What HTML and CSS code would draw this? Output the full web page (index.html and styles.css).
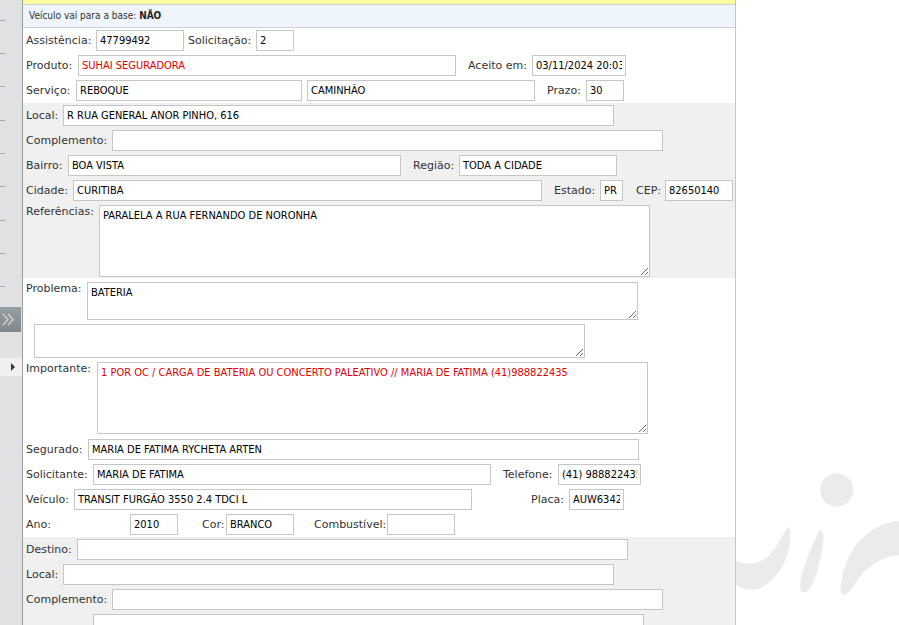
FILE: index.html
```html
<!DOCTYPE html>
<html lang="pt-BR">
<head>
<meta charset="utf-8">
<title>Atendimento</title>
<link rel="stylesheet" href="styles.css">
</head>
<body>
<div class="app">
  <aside class="side">
    <div class="side-lines"></div>
    <div class="side-btn">
      <svg width="21" height="25" viewBox="0 0 21 25"><path d="M3 7 L8 12.5 L3 18 M8 7 L13 12.5 L8 18" fill="none" stroke="#c9ced2" stroke-width="1.6"/></svg>
    </div>
    <div class="side-row"><span class="tri"></span></div>
  </aside>

  <main class="panel">
    <div class="bar-yellow"></div>
    <div class="bar-info">Veículo vai para a base: <b>NÃO</b></div>

    <section class="sec">
      <div class="row">
        <span class="lbl w70">Assistência:</span><input class="inp w88" value="47799492" readonly>
        <span class="lbl w72 pl4">Solicitação:</span><input class="inp w38" value="2" readonly>
      </div>
      <div class="row">
        <span class="lbl w52">Produto:</span><input class="inp w378 red" value="SUHAI SEGURADORA" readonly>
        <span class="lbl w76 pl12">Aceito em:</span><input class="inp w94" value="03/11/2024 20:03" readonly>
      </div>
      <div class="row">
        <span class="lbl w50">Serviço:</span><input class="inp w226" value="REBOQUE" readonly>
        <input class="inp w228 ml5" value="CAMINHÃO" readonly>
        <span class="lbl w51 pl12">Prazo:</span><input class="inp w38" value="30" readonly>
      </div>
    </section>

    <section class="sec sec-gray">
      <div class="row">
        <span class="lbl w37">Local:</span><input class="inp w551" value="R RUA GENERAL ANOR PINHO, 616" readonly>
      </div>
      <div class="row">
        <span class="lbl w86">Complemento:</span><input class="inp w551" value="" readonly>
      </div>
      <div class="row">
        <span class="lbl w42">Bairro:</span><input class="inp w333" value="BOA VISTA" readonly>
        <span class="lbl w58 pl12">Região:</span><input class="inp w158" value="TODA A CIDADE" readonly>
      </div>
      <div class="row">
        <span class="lbl w47">Cidade:</span><input class="inp w469" value="CURITIBA" readonly>
        <span class="lbl w58 pl12">Estado:</span><input class="inp w23" value="PR" readonly>
        <span class="lbl w42 pl13">CEP:</span><input class="inp w68" value="82650140" readonly>
      </div>
      <div class="row row-ta row-ref">
        <span class="lbl lbl-top w73">Referências:</span><textarea class="ta w551 h72" readonly>PARALELA A RUA FERNANDO DE NORONHA</textarea>
      </div>
    </section>

    <section class="sec">
      <div class="row row-ta row-prob">
        <span class="lbl lbl-top w61">Problema:</span><textarea class="ta w551 h38" readonly>BATERIA</textarea>
      </div>
      <div class="row row-ta">
        <span class="lbl lbl-top w8"></span><textarea class="ta w551 h34" readonly></textarea>
      </div>
      <div class="row row-ta row-imp">
        <span class="lbl lbl-top w71">Importante:</span><textarea class="ta w551 h72 red" readonly>1 POR OC / CARGA DE BATERIA OU CONCERTO PALEATIVO // MARIA DE FATIMA (41)988822435</textarea>
      </div>
      <div class="row">
        <span class="lbl w62">Segurado:</span><input class="inp w551" value="MARIA DE FATIMA RYCHETA ARTEN" readonly>
      </div>
      <div class="row">
        <span class="lbl w67">Solicitante:</span><input class="inp w398" value="MARIA DE FATIMA" readonly>
        <span class="lbl w67 pl12">Telefone:</span><input class="inp w83" value="(41) 988822435" readonly>
      </div>
      <div class="row">
        <span class="lbl w48">Veículo:</span><input class="inp w398" value="TRANSIT FURGÃO 3550 2.4 TDCI L" readonly>
        <span class="lbl w97 pl59">Placa:</span><input class="inp w55" value="AUW6342" readonly>
      </div>
      <div class="row">
        <span class="lbl w104">Ano:</span><input class="inp w48" value="2010" readonly>
        <span class="lbl w48 pl24">Cor:</span><input class="inp w68" value="BRANCO" readonly>
        <span class="lbl w93 pl20">Combustível:</span><input class="inp w68" value="" readonly>
      </div>
    </section>

    <section class="sec sec-gray sec-last">
      <div class="row">
        <span class="lbl w51">Destino:</span><input class="inp w551" value="" readonly>
      </div>
      <div class="row">
        <span class="lbl w37">Local:</span><input class="inp w551" value="" readonly>
      </div>
      <div class="row">
        <span class="lbl w86">Complemento:</span><input class="inp w551" value="" readonly>
      </div>
      <div class="row">
        <span class="lbl w67"></span><input class="inp w551" value="" readonly>
      </div>
    </section>
  </main>

  <div class="outside">
    <svg class="mark" width="163" height="165" viewBox="736 460 163 165">
      <circle cx="836.7" cy="490" r="16.5" fill="#ebebeb"/>
      <path d="M735 560 C745 566 760 566 771 553 C778 545 784 533 788 527 C792 530 791 545 786 558 C781 572 770 585 758 589 C748 591 740 588 735 584 Z" fill="#ebebeb"/>
      <path d="M820 530 C826 532 823 548 819 565 C816 578 812 588 806 592 C800 594 799 586 801 578 C805 562 814 540 820 530 Z" fill="#ebebeb"/>
      <path d="M843 595 C838 592 842 570 850 555 C860 535 880 522 899 521 L899 555 C885 556 872 563 862 574 C855 582 850 595 843 595 Z" fill="#ebebeb"/>
    </svg>
  </div>
</div>
</body>
</html>
```

FILE: styles.css
```css
html, body {
  margin: 0;
  padding: 0;
  width: 899px;
  height: 625px;
  overflow: hidden;
  background: #fff;
}

.app {
  display: flex;
  width: 899px;
  height: 625px;
  font-family: "DejaVu Sans", Verdana, sans-serif;
}

/* left collapsed sidebar */
.side {
  flex: none;
  width: 22px;
  height: 625px;
  background: #dfe1e3;
  border-right: 1px solid #9d9d9d;
  display: flex;
  flex-direction: column;
}

.side-lines {
  width: 5px;
  height: 290px;
  background: repeating-linear-gradient(to bottom,
    transparent 0 20px, #a9a9a9 20px 21px,
    transparent 21px 53px, #a9a9a9 53px 54px,
    transparent 54px 86px, #a9a9a9 86px 87px,
    transparent 87px 100px);
}

.side-btn {
  margin-top: 17px;
  width: 21px;
  height: 25px;
  background: linear-gradient(#969ea4, #80888e);
}

.side-btn svg {
  display: block;
}

.side-row {
  margin-top: 26px;
  height: 18px;
  background: #f0f0f0;
  display: flex;
  align-items: center;
  padding-left: 11px;
}

.tri {
  width: 0;
  height: 0;
  border-left: 4px solid #333;
  border-top: 4px solid transparent;
  border-bottom: 4px solid transparent;
}

/* main form panel */
.panel {
  flex: none;
  width: 712px;
  height: 625px;
  border-right: 1px solid #c4c4c4;
  overflow: hidden;
  background: #fff;
}

.bar-yellow {
  height: 4px;
  background: #fdfb9e;
  border-bottom: 1px solid #cfcfcf;
}

.bar-info {
  height: 22px;
  line-height: 21px;
  padding-left: 6px;
  background: #eef5fc;
  border-bottom: 1px solid #cfcfcf;
  font-family: "DejaVu Sans Condensed", "DejaVu Sans", sans-serif;
  font-size: 10px;
  color: #333;
}

.bar-info b {
  font-weight: bold;
  color: #222;
}

.sec {
  background: #fff;
}

.sec-gray {
  background: #f0f0f0;
}

.sec-last {
  height: 200px;
}

.row {
  display: flex;
  align-items: flex-start;
  padding: 2px 0 2px 3px;
}

.row-ref {
  padding: 2px 0 1px 3px;
}

.row-prob {
  padding: 4px 0 2px 3px;
}

.row-imp {
  padding: 2px 0 3px 3px;
}

.lbl {
  flex: none;
  box-sizing: border-box;
  height: 21px;
  line-height: 21px;
  font-size: 11px;
  color: #333;
  white-space: nowrap;
  overflow: visible;
}

.lbl-top {
  height: auto;
  line-height: 14px;
}

.inp {
  flex: none;
  box-sizing: border-box;
  height: 21px;
  margin: 0;
  padding: 0 3px;
  border: 1px solid #c6c6c6;
  border-radius: 0;
  background: #fff;
  font-family: "DejaVu Sans Condensed", "DejaVu Sans", sans-serif;
  font-size: 11px;
  color: #000;
  outline: none;
}

.ta {
  flex: none;
  display: block;
  box-sizing: border-box;
  margin: 0;
  padding: 3px 3px;
  border: 1px solid #c6c6c6;
  border-radius: 0;
  background: #fff;
  font-family: "DejaVu Sans Condensed", "DejaVu Sans", sans-serif;
  font-size: 11px;
  line-height: 14px;
  color: #000;
  outline: none;
  overflow: hidden;
}

.red {
  color: #e00000;
}

.ml5 { margin-left: 5px; }

.pl4 { padding-left: 4px; }
.pl12 { padding-left: 12px; }
.pl13 { padding-left: 13px; }
.pl20 { padding-left: 20px; }
.pl24 { padding-left: 24px; }
.pl59 { padding-left: 59px; }

.w8 { width: 8px; }
.w23 { width: 23px; }
.w37 { width: 37px; }
.w38 { width: 38px; }
.w42 { width: 42px; }
.w47 { width: 47px; }
.w48 { width: 48px; }
.w50 { width: 50px; }
.w51 { width: 51px; }
.w52 { width: 52px; }
.w55 { width: 55px; }
.w58 { width: 58px; }
.w61 { width: 61px; }
.w62 { width: 62px; }
.w67 { width: 67px; }
.w68 { width: 68px; }
.w70 { width: 70px; }
.w71 { width: 71px; }
.w72 { width: 72px; }
.w73 { width: 73px; }
.w76 { width: 76px; }
.w83 { width: 83px; }
.w86 { width: 86px; }
.w88 { width: 88px; }
.w93 { width: 93px; }
.w94 { width: 94px; }
.w97 { width: 97px; }
.w104 { width: 104px; }
.w158 { width: 158px; }
.w226 { width: 226px; }
.w228 { width: 228px; }
.w333 { width: 333px; }
.w378 { width: 378px; }
.w398 { width: 398px; }
.w469 { width: 469px; }
.w551 { width: 551px; }

.h34 { height: 34px; }
.h38 { height: 38px; }
.h72 { height: 72px; }

/* area right of the panel with the faint logo */
.outside {
  flex: 1;
  position: relative;
  height: 625px;
  background: #fff;
}

.mark {
  position: absolute;
  left: 0;
  top: 460px;
  display: block;
}
```
